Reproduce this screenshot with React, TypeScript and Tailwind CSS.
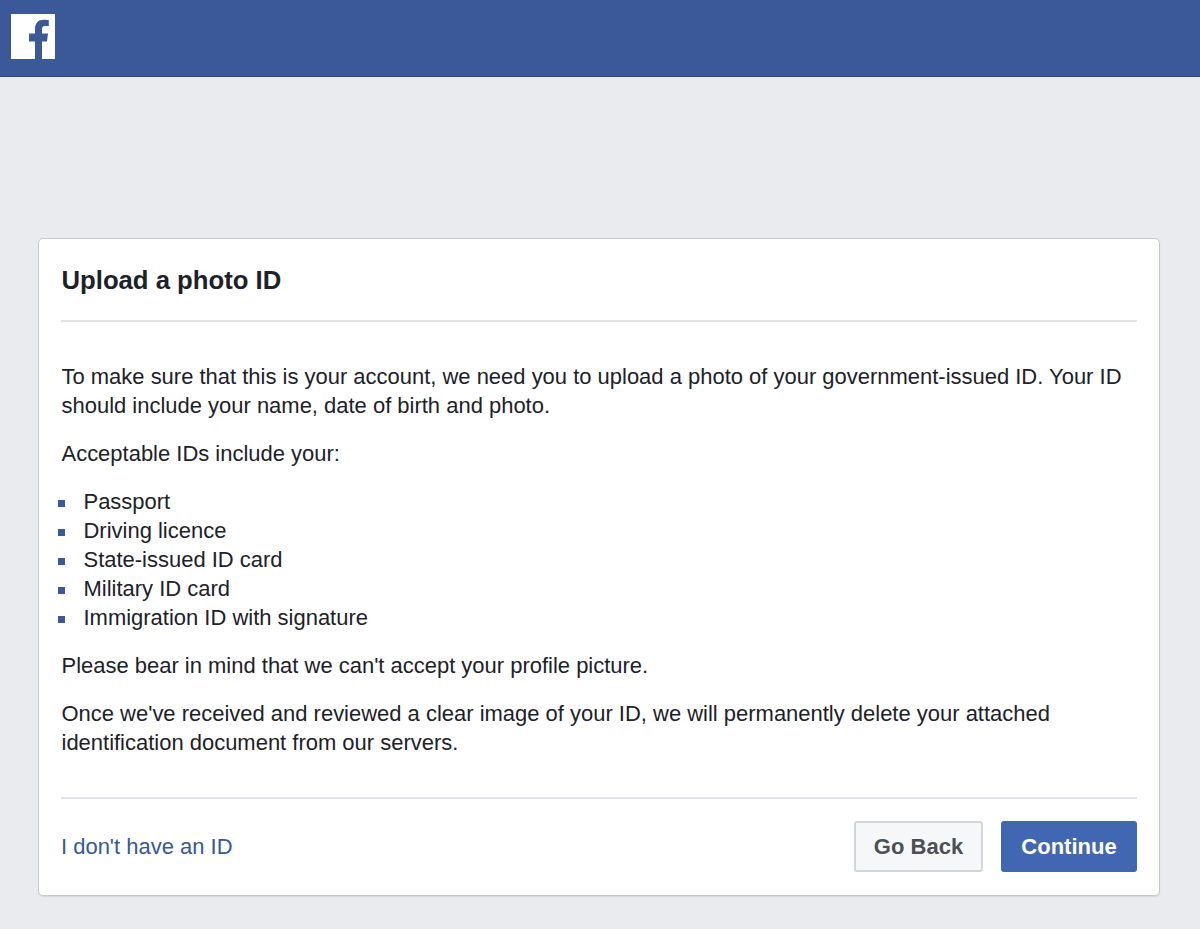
export default function App() {
  const items = ["Passport", "Driving licence", "State-issued ID card", "Military ID card", "Immigration ID with signature"];
  return (
    <div className="min-h-[929px] bg-[#e9ebee] font-['Liberation_Sans',Arial,sans-serif] text-[21.97px] leading-[29px] text-[#1d2129] overflow-hidden">
      <header className="h-[77px] bg-[#3b5998] border-b border-[#29487d] pt-[14px] pl-[11px]">
        <div className="w-[44px] h-[45px] bg-white overflow-hidden">
          <svg viewBox="0 0 44 45" className="w-[44px] h-[45px]">
            <path d="M24 45V27.5H18V19.5H24V15C24 9 27.5 5.8 32.5 5.8C34.8 5.8 36.5 6 37.8 6.2V12H34.5C31.5 12 31 13.5 31 15.5V19.5H37L36 27.5H31V45Z" fill="#3b5998" />
          </svg>
        </div>
      </header>
      <main className="ml-[38px] mr-[40px] mt-[161px] h-[658px] bg-white border border-[#c6c9ce] rounded-[5px] shadow-[0_1px_1px_#d5d7db] px-[22px] flex flex-col">
        <h1 className="h-[83px] flex items-center border-b-2 border-[#e0e2e5] pl-[0.5px] pt-[2px] text-[25.7px] font-bold">Upload a photo ID</h1>
        <div className="pt-[40px] pl-[0.5px] flex-1 border-b-2 border-[#e0e2e5]">
          <p>To make sure that this is your account, we need you to upload a photo of your government-issued ID. Your ID should include your name, date of birth and photo.</p>
          <p className="mt-[19px]">Acceptable IDs include your:</p>
          <ul className="mt-[19px]">
            {items.map((t) => (
              <li key={t} className="flex items-center h-[29px]">
                <span className="w-[7px] h-[7px] bg-[#3b5998] ml-[-4px] mt-[3px] mr-[19px]" />
                {t}
              </li>
            ))}
          </ul>
          <p className="mt-[19px]">Please bear in mind that we can't accept your profile picture.</p>
          <p className="mt-[19px]">Once we've received and reviewed a clear image of your ID, we will permanently delete your attached identification document from our servers.</p>
        </div>
        <footer className="h-[96px] flex items-center justify-between pb-[2px]">
          <a className="text-[#365899]">I don't have an ID</a>
          <div className="flex gap-[18px]">
            <button className="w-[129px] h-[51px] bg-[#f6f7f9] border-2 border-[#d3d5d9] rounded-[3px] text-[#4b4f56] font-bold text-[22px]">Go Back</button>
            <button className="w-[136px] h-[51px] bg-[#4267b2] rounded-[3px] text-white font-bold text-[22px]">Continue</button>
          </div>
        </footer>
      </main>
    </div>
  );
}
